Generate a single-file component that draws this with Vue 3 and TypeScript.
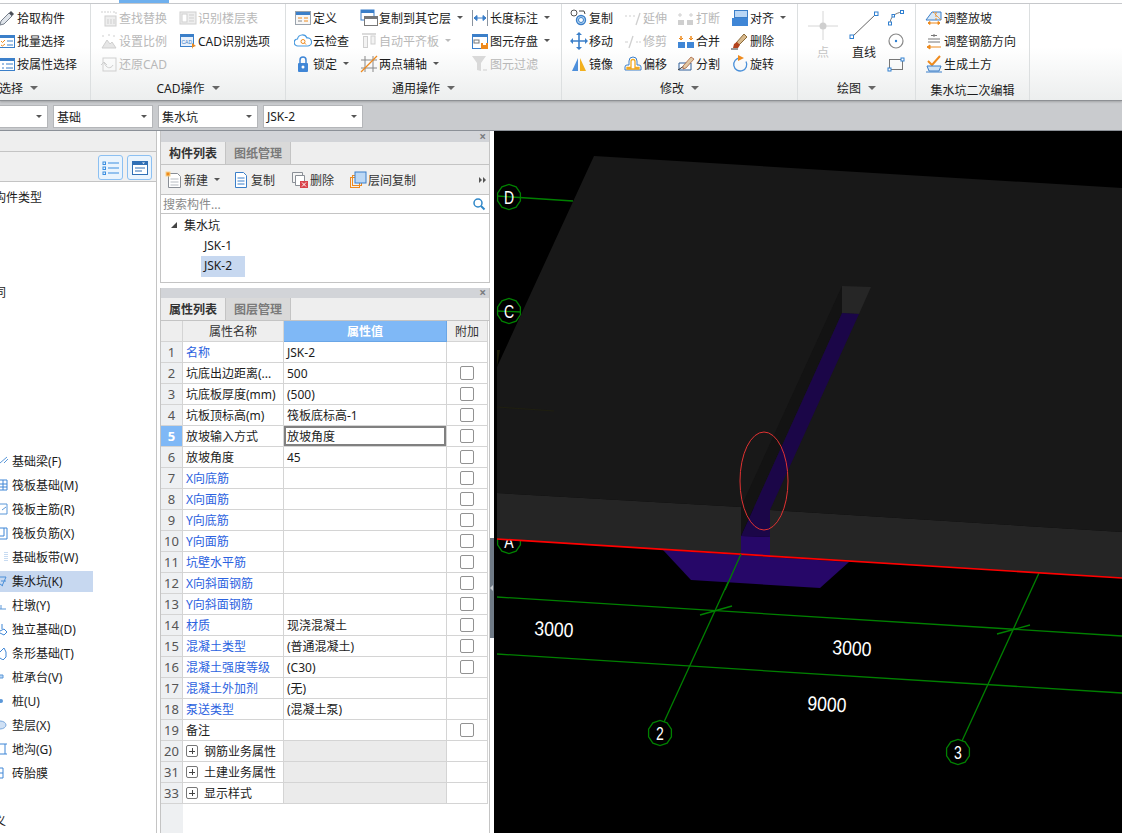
<template>
  <div class="app">
    <!-- 顶部页签线 -->
    <div class="tabline"><span class="tabline-active"></span></div>

    <!-- 功能区 -->
    <div class="ribbon">
      <template v-for="g in groups" :key="g.title">
        <section class="group" :style="{ width: g.width + 'px' }">
          <div v-if="g.draw" class="cols draw" :style="{ paddingLeft: g.pad + 'px' }">
            <div class="big big-point">
              <svg width="30" height="29" viewBox="0 0 30 29" v-html="icons.point"></svg>
              <span>点</span>
            </div>
            <div class="big big-line">
              <svg width="30" height="29" viewBox="0 0 30 29" v-html="icons.line"></svg>
              <span>直线</span>
            </div>
            <div class="col">
              <div v-for="n in ['arc', 'circle', 'rect']" :key="n" class="item">
                <svg class="ico" viewBox="0 0 18 18" v-html="icons[n]"></svg>
              </div>
            </div>
          </div>
          <div v-else class="cols" :style="{ paddingLeft: g.pad + 'px' }">
            <div v-for="(col, i) in g.cols" :key="i" class="col" :style="{ width: col.width + 'px' }">
              <div v-for="it in col.items" :key="it.label" class="item" :class="{ disabled: it.off }">
                <svg class="ico" viewBox="0 0 18 18" v-html="icons[it.icon]"></svg>
                <span class="lbl">{{ it.label }}</span>
                <i v-if="it.arrow" class="caret"></i>
              </div>
            </div>
          </div>
          <div class="gtitle" :class="g.titleClass">
            <span>{{ g.title }}</span>
            <i v-if="g.titleArrow" class="caret caret-title"></i>
          </div>
        </section>
      </template>
    </div>

    <!-- 下拉选择条 -->
    <div class="selbar">
      <div v-for="(s, i) in selects" :key="i" class="sel" :class="{ 'sel-first': i === 0 }">
        <span>{{ s }}</span>
        <i class="caret"></i>
      </div>
    </div>

    <div class="main">
      <!-- 左侧导航树 -->
      <aside class="nav">
        <div class="nav-head"></div>
        <div class="nav-tools">
          <div class="nav-btn">
            <svg width="18" height="14" viewBox="0 0 18 14" v-html="icons.navList"></svg>
          </div>
          <div class="nav-btn">
            <svg width="16" height="14" viewBox="0 0 16 14" v-html="icons.navForm"></svg>
          </div>
        </div>
        <div class="nav-tree">
          <div class="nav-cut nav-cut-1">构件类型</div>
          <div class="nav-cut nav-cut-2">同</div>
          <ul class="nav-list">
            <li v-for="(n, i) in navItems" :key="n" class="nav-row">
              <div class="nav-cell" :class="{ on: n === '集水坑(K)' }">
                <svg class="nav-ico" width="9" height="14" viewBox="0 0 9 14" v-html="navIcons[i % navIcons.length]"></svg>
                <span>{{ n }}</span>
              </div>
            </li>
          </ul>
          <div class="nav-cut nav-cut-3">义</div>
        </div>
      </aside>

      <div class="gap"></div>

      <!-- 中间面板 -->
      <div class="mid">
        <div class="panel panel-list">
          <div class="phead"><span class="px">×</span></div>
          <div class="ptabs">
            <span class="ptab on">构件列表</span>
            <span class="ptab">图纸管理</span>
          </div>
          <div class="ptools">
            <div v-for="t in tools" :key="t.label" class="ptool" :style="{ width: t.width + 'px' }">
              <svg class="ico" viewBox="0 0 18 18" v-html="icons[t.icon]"></svg>
              <span>{{ t.label }}</span>
              <i v-if="t.arrow" class="caret"></i>
            </div>
            <span class="pmore">
              <i class="tri"></i><i class="tri"></i>
            </span>
          </div>
          <div class="psearch">
            <span>搜索构件...</span>
            <svg width="14" height="14" viewBox="0 0 14 14">
              <circle cx="6" cy="6" r="4" fill="none" stroke="#2f87c8" stroke-width="1.5" />
              <path d="M9 9l3.5 3.5" stroke="#2f87c8" stroke-width="2" />
            </svg>
          </div>
          <div class="ptree">
            <div class="ptree-row"><i class="expand"></i><span>集水坑</span></div>
            <div class="ptree-row leaf"><span>JSK-1</span></div>
            <div class="ptree-row leaf"><span class="on">JSK-2</span></div>
          </div>
        </div>

        <div class="panel panel-props">
          <div class="phead short"><span class="px">×</span></div>
          <div class="ptabs">
            <span class="ptab on">属性列表</span>
            <span class="ptab">图层管理</span>
          </div>
          <div class="grid">
            <div class="tr th">
              <div class="td num"></div>
              <div class="td ctr">属性名称</div>
              <div class="td ctr val-head">属性值</div>
              <div class="td ctr">附加</div>
            </div>
            <div v-for="r in rows" :key="r.no" class="tr">
              <div class="td num" :class="{ cur: r.cur }">{{ r.no }}</div>
              <div class="td name" :class="{ blue: r.blue }">
                <template v-if="r.group">
                  <i class="plus"></i><span class="group-name">{{ r.name }}</span>
                </template>
                <template v-else>{{ r.name }}</template>
              </div>
              <div class="td val" :class="{ editing: r.cur, shaded: r.group }">{{ r.value }}</div>
              <div class="td attach"><i v-if="r.check" class="check"></i></div>
            </div>
            <div class="grid-rest"></div>
          </div>
        </div>
      </div>

      <!-- 分隔条 -->
      <div class="gutter">
        <div class="handle"><i></i></div>
      </div>

      <!-- 三维视图 -->
      <svg class="view" width="628" height="702" viewBox="494 131 628 702">
        <rect x="494" y="131" width="628" height="702" fill="#000" />

        <!-- 轴网 -->
        <g stroke="#008000" stroke-width="1.3" fill="none">
          <path d="M497 196L573 201" />
          <path d="M497 311L521 312" />
          <path d="M497 597L1122 636" />
          <path d="M497 654L1122 693" />
          <path d="M741 554L664 722" />
          <path d="M1039 573L962 741" />
          <path d="M700 615L732 606" />
          <path d="M997 634L1030 625" />
          <polygon v-for="b in bubbles" :key="b.t" :points="bubblePoints(b.x, b.y)" />
        </g>
        <text
          v-for="b in bubbles"
          :key="b.t"
          class="cad-text"
          text-anchor="middle"
          :transform="`translate(${b.x} ${b.y + 6.5}) scale(.78 1)`"
        >{{ b.t }}</text>

        <!-- 筏板 -->
        <polygon points="594,156 1122,188 1122,532 770,510 741,507 497,493 497,367" fill="#181818" />
        <polygon points="497,493 741,507 741,554 497,539" fill="#252525" />
        <polygon points="770,510 1122,532 1122,578 770,556" fill="#252525" />
        <path d="M497 407L554 411" stroke="#1f1f10" />
        <polygon points="497,350 500,350 497,367" fill="#1c1c08" />

        <!-- 集水坑 -->
        <polygon points="842,286 842,313 741,536 741,507" fill="#131313" />
        <polygon points="842,286 871,287 859,314 842,313" fill="#262626" />
        <polygon points="842,313 859,314 770,510 770,537 741,536" fill="#1b0648" />
        <polygon points="741,536 770,537 770,556 741,554" fill="#260768" />
        <polygon points="663,550 849,562 820,588 691,580" fill="#260768" />

        <path d="M497 539L1122 578" stroke="#f00" stroke-width="1.7" />
        <path d="M741 554L725 590" stroke="#008000" stroke-width="1.3" />
        <ellipse cx="764" cy="481" rx="24" ry="49" fill="none" stroke="#e03232" />

        <text class="cad-text dim" transform="translate(534 635) rotate(3.5) scale(.88 1)">3000</text>
        <text class="cad-text dim" transform="translate(832 654) rotate(3.5) scale(.88 1)">3000</text>
        <text class="cad-text dim" transform="translate(807 710) rotate(3.5) scale(.88 1)">9000</text>
      </svg>
    </div>
  </div>
</template>

<script setup lang="ts">
interface Item {
  label: string
  icon: string
  off?: boolean
  arrow?: boolean
}

interface Group {
  title: string
  width: number
  pad: number
  titleArrow?: boolean
  titleClass?: string
  draw?: boolean
  cols?: { width: number; items: Item[] }[]
}

const groups: Group[] = [
  {
    title: '选择',
    width: 91,
    pad: 0,
    titleArrow: true,
    titleClass: 'gtitle-left',
    cols: [
      {
        width: 90,
        items: [
          { label: '拾取构件', icon: 'pick' },
          { label: '批量选择', icon: 'batch' },
          { label: '按属性选择', icon: 'attr' }
        ]
      }
    ]
  },
  {
    title: 'CAD操作',
    width: 195,
    pad: 9,
    titleArrow: true,
    cols: [
      {
        width: 79,
        items: [
          { label: '查找替换', icon: 'find', off: true },
          { label: '设置比例', icon: 'scale', off: true },
          { label: '还原CAD', icon: 'restore', off: true }
        ]
      },
      {
        width: 100,
        items: [
          { label: '识别楼层表', icon: 'floors', off: true },
          { label: 'CAD识别选项', icon: 'cadOpt' }
        ]
      }
    ]
  },
  {
    title: '通用操作',
    width: 276,
    pad: 8,
    titleArrow: true,
    cols: [
      {
        width: 66,
        items: [
          { label: '定义', icon: 'define' },
          { label: '云检查', icon: 'cloud' },
          { label: '锁定', icon: 'lock', arrow: true }
        ]
      },
      {
        width: 111,
        items: [
          { label: '复制到其它层', icon: 'copyLayer', arrow: true },
          { label: '自动平齐板', icon: 'flush', off: true, arrow: true },
          { label: '两点辅轴', icon: 'axis', arrow: true }
        ]
      },
      {
        width: 85,
        items: [
          { label: '长度标注', icon: 'dim', arrow: true },
          { label: '图元存盘', icon: 'save', arrow: true },
          { label: '图元过滤', icon: 'filter', off: true }
        ]
      }
    ]
  },
  {
    title: '修改',
    width: 236,
    pad: 8,
    titleArrow: true,
    cols: [
      {
        width: 54,
        items: [
          { label: '复制', icon: 'copy' },
          { label: '移动', icon: 'move' },
          { label: '镜像', icon: 'mirror' }
        ]
      },
      {
        width: 53,
        items: [
          { label: '延伸', icon: 'extend', off: true },
          { label: '修剪', icon: 'trim', off: true },
          { label: '偏移', icon: 'offset' }
        ]
      },
      {
        width: 54,
        items: [
          { label: '打断', icon: 'breakup', off: true },
          { label: '合并', icon: 'merge' },
          { label: '分割', icon: 'split' }
        ]
      },
      {
        width: 60,
        items: [
          { label: '对齐', icon: 'align', arrow: true },
          { label: '删除', icon: 'erase' },
          { label: '旋转', icon: 'rotate' }
        ]
      }
    ]
  },
  { title: '绘图', width: 118, pad: 7, titleArrow: true, draw: true },
  {
    title: '集水坑二次编辑',
    width: 114,
    pad: 9,
    titleClass: 'gtitle-low',
    cols: [
      {
        width: 104,
        items: [
          { label: '调整放坡', icon: 'slope' },
          { label: '调整钢筋方向', icon: 'rebarDir' },
          { label: '生成土方', icon: 'earth' }
        ]
      }
    ]
  }
]

const selects = ['', '基础', '集水坑', 'JSK-2']

const navItems = [
  '基础梁(F)', '筏板基础(M)', '筏板主筋(R)', '筏板负筋(X)', '基础板带(W)', '集水坑(K)', '柱墩(Y)',
  '独立基础(D)', '条形基础(T)', '桩承台(V)', '桩(U)', '垫层(X)', '地沟(G)', '砖胎膜'
]

const tools = [
  { label: '新建', icon: 'newDoc', width: 67, arrow: true },
  { label: '复制', icon: 'copyDoc', width: 59 },
  { label: '删除', icon: 'delDoc', width: 58 },
  { label: '层间复制', icon: 'layerCopy', width: 72 }
]

const blueNames = new Set([1, 7, 8, 9, 10, 11, 12, 13, 14, 15, 16, 17, 18])
const noCheck = new Set([1, 17, 18, 20, 31, 33])

const rowData: [number, string, string][] = [
  [1, '名称', 'JSK-2'],
  [2, '坑底出边距离(...', '500'],
  [3, '坑底板厚度(mm)', '(500)'],
  [4, '坑板顶标高(m)', '筏板底标高-1'],
  [5, '放坡输入方式', '放坡角度'],
  [6, '放坡角度', '45'],
  [7, 'X向底筋', ''],
  [8, 'X向面筋', ''],
  [9, 'Y向底筋', ''],
  [10, 'Y向面筋', ''],
  [11, '坑壁水平筋', ''],
  [12, 'X向斜面钢筋', ''],
  [13, 'Y向斜面钢筋', ''],
  [14, '材质', '现浇混凝土'],
  [15, '混凝土类型', '(普通混凝土)'],
  [16, '混凝土强度等级', '(C30)'],
  [17, '混凝土外加剂', '(无)'],
  [18, '泵送类型', '(混凝土泵)'],
  [19, '备注', ''],
  [20, '钢筋业务属性', ''],
  [31, '土建业务属性', ''],
  [33, '显示样式', '']
]

const rows = rowData.map(([no, name, value]) => ({
  no,
  name,
  value,
  blue: blueNames.has(no),
  check: !noCheck.has(no),
  cur: no === 5,
  group: no >= 20
}))

const bubbles = [
  { t: 'D', x: 509, y: 197 },
  { t: 'C', x: 509, y: 311 },
  { t: 'A', x: 509, y: 541 },
  { t: '2', x: 660, y: 733 },
  { t: '3', x: 958, y: 752 }
]

// 轴号圈是十边形
const bubblePoints = (x: number, y: number) => {
  const pts: string[] = []
  for (let i = 0; i < 10; i++) {
    const a = (Math.PI * 2 * i) / 10 + Math.PI / 10
    pts.push(`${(x + 12 * Math.cos(a)).toFixed(1)},${(y + 12.5 * Math.sin(a)).toFixed(1)}`)
  }
  return pts.join(' ')
}

const B = '#3b7fc9'
const O = '#ee8a1d'
const G = '#cfcfcf'
const win = `<rect x="1.5" y="3.5" width="15" height="12" fill="#fff" stroke="${B}"/><rect x="1" y="3" width="16" height="3" fill="${B}"/>`

const icons: Record<string, string> = {
  pick: `<path d="M2 16l1-4 8-8 3 3-8 8z" fill="#dfe4ea" stroke="#77808c"/><path d="M11 4l2-2 3 3-2 2z" fill="#4a4f57"/>`,
  batch: `${win}<path d="M3 9l1.5 1.5L7 8M3 13l1.5 1L7 12" stroke="${O}" fill="none"/><path d="M9 9h6M9 13h6" stroke="${B}"/>`,
  attr: `${win}<path d="M4 9h2M4 13h2M8 9h7M8 13h7" stroke="${B}"/>`,
  find: `<path d="M1 3h10M13 3h3v3" stroke="${G}" stroke-dasharray="2 1" fill="none"/><rect x="5" y="7" width="11" height="10" fill="#eee" stroke="${G}"/><path d="M8 10v5M11 10v5M14 10v5" stroke="${G}"/>`,
  scale: `<path d="M2 16l5-8 3 4 2-2 4 6z" fill="#e6e6e6" stroke="${G}"/><path d="M2 4h3M13 4h3M9 2v3" stroke="${G}" stroke-dasharray="2 1"/>`,
  restore: `<rect x="3" y="3" width="13" height="13" fill="none" stroke="${G}"/><path d="M1 10l3-3 3 3M4 7c2 7 7 7 9 3" fill="none" stroke="${G}"/>`,
  floors: `<rect x="1" y="3" width="16" height="12" fill="#eee" stroke="${G}"/><rect x="3" y="5" width="5" height="8" fill="#fff" stroke="${G}"/><path d="M10 6h5M10 9h5M10 12h5" stroke="${G}"/>`,
  cadOpt: `<rect x="1.5" y="2.5" width="13" height="12" fill="#e9f1fb" stroke="${B}"/><rect x="1" y="2" width="14" height="3" fill="${B}"/><text x="2.5" y="12" font-size="5" fill="${B}" font-family="Liberation Sans">CAD</text><path d="M13 11l4 3-3 1-1 2z" fill="${O}"/>`,
  define: `<rect x="1.5" y="2.5" width="15" height="13" fill="#f7f7f7" stroke="#9aa3ad"/><rect x="2" y="3" width="14" height="3" fill="${B}"/><path d="M4 9h4M10 9h4M10 12h4" stroke="${O}"/><path d="M4 12h4" stroke="#888"/>`,
  cloud: `<path d="M4 14a3.5 3.5 0 0 1-.5-7A5 5 0 0 1 13 6a4 4 0 0 1 1 8z" fill="#fff" stroke="#4a9be0" stroke-width="1.2"/><circle cx="9" cy="9.5" r="2" fill="none" stroke="${O}"/><path d="M10.5 11l1.5 1.5" stroke="${O}"/>`,
  lock: `<path d="M6 8V5a3 3 0 0 1 6 0v3" fill="none" stroke="#3f86d6" stroke-width="1.5"/><rect x="4" y="8" width="10" height="9" rx="1" fill="#3f86d6"/><circle cx="9" cy="12" r="1.5" fill="#fff"/>`,
  copyLayer: `<rect x="1" y="1" width="13" height="10" fill="#fff" stroke="${B}"/><rect x="1" y="1" width="13" height="3" fill="${B}"/><rect x="4.5" y="7.5" width="13" height="9" fill="#fff" stroke="#777"/><rect x="4" y="7" width="14" height="3" fill="#777"/>`,
  flush: `<path d="M2 2h14" stroke="${G}" stroke-width="1.5"/><rect x="3.5" y="4.5" width="4" height="11" fill="#f3f3f3" stroke="${G}"/><rect x="11" y="4" width="4" height="8" fill="#f3f3f3" stroke="${G}"/>`,
  axis: `<path d="M5 1v16M13 1v16M1 5h16M1 13h16" stroke="#888"/><path d="M1 17L17 1" stroke="${O}" stroke-width="1.3"/>`,
  dim: `<path d="M1.5 1v16M16.5 1v16" stroke="#8a94a0"/><path d="M3 9h12M3 9l3-2.5v5zM15 9l-3-2.5v5z" stroke="${B}" fill="${B}"/>`,
  save: `<rect x="1.5" y="2.5" width="15" height="14" fill="#fff" stroke="${B}"/><rect x="1" y="2" width="16" height="3" fill="${B}"/><rect x="3" y="8" width="5" height="3" fill="none" stroke="#777"/><rect x="10" y="11" width="7" height="6" fill="${O}"/><rect x="12" y="11" width="3" height="2" fill="#fff"/>`,
  filter: `<path d="M1 1h14l-5 7v8l-4-1V8z" fill="#d9d9d9"/><path d="M12 15h4" stroke="${G}"/>`,
  copy: `<circle cx="4" cy="4" r="3" fill="#fff" stroke="#555"/><circle cx="11" cy="11" r="4.5" fill="#bcdcf5" stroke="${B}" stroke-width="1.4"/><circle cx="11" cy="11" r="2.5" fill="#fff" stroke="${B}"/><path d="M9 2h5l1 3" fill="none" stroke="#444"/>`,
  move: `<path d="M9 2v14M2 9h14" stroke="${B}" stroke-width="1.6"/><path d="M9 0l3 3H6zM9 18l3-3H6zM0 9l3-3v6zM18 9l-3-3v6z" fill="${B}"/>`,
  mirror: `<path d="M8 3v13H2z" fill="#4d8fdb"/><path d="M10 3v13h6z" fill="#f2b01e"/>`,
  extend: `<path d="M1 7h2M5 7h2M9 7h2" stroke="${G}"/><path d="M12 16l4-12" stroke="${G}" stroke-width="1.3"/>`,
  trim: `<path d="M1 10h3M12 10h2M15 10h2" stroke="${G}"/><path d="M5 16l4-12" stroke="${G}" stroke-width="1.3"/>`,
  offset: `<path d="M1 15v-3a2 2 0 0 1 2-2h2V6a4 4 0 0 1 8 0v4h2a2 2 0 0 1 2 2v3z" fill="#fff" stroke="${B}"/><path d="M3 14v-1.500h4V6.500a2 2 0 0 1 4 0v6h4V14z" fill="none" stroke="#f2a81e" stroke-width="1.3"/>`,
  breakup: `<rect x="1" y="11" width="6" height="5" fill="${G}"/><rect x="10" y="11" width="6" height="5" fill="${G}"/><path d="M3 4v4M14 4v4M1 6h4M12 6h4" stroke="${G}"/>`,
  merge: `<rect x="1" y="10" width="7" height="6" fill="#3f86d6"/><rect x="10" y="10" width="7" height="6" fill="#3f86d6"/><path d="M4 4v4M14 4v4" stroke="${O}" stroke-width="1.5"/><path d="M2 6l2 2 2-2M12 6l2 2 2-2" stroke="${O}" fill="none"/>`,
  split: `<path d="M2 8h12v7H2z" fill="#fff" stroke="#2f5e99"/><path d="M1 15l9-6" stroke="#333"/><path d="M6 11l8-9 3 2-8 9-3 1z" fill="#e2c9a5" stroke="#a0522d" stroke-width=".7"/>`,
  align: `<rect x="3.500" y="1.500" width="13" height="7" fill="#b9d6f5" stroke="${B}"/><rect x="1" y="9" width="16" height="8" fill="#3f86d6"/>`,
  erase: `<path d="M5 11l8-9 3 3-8 8z" fill="#d8b98c" stroke="#8a6a3a"/><path d="M3 12l3-2 3 3-2 3H2z" fill="#b3431d"/><path d="M0 17h7" stroke="#333"/>`,
  rotate: `<path d="M9 3a6.500 6.500 0 1 0 6 3.500" fill="none" stroke="#4a90d9" stroke-width="1.300"/><path d="M7 0l6 3-6 3z" fill="${O}"/>`,
  point: `<path d="M15 0v29M0 15h30" stroke="#d6d6d6"/><circle cx="15" cy="15" r="3.500" fill="#cfcfcf"/>`,
  line: `<path d="M3 26L27 3" stroke="#666"/><rect x="1" y="24" width="3.500" height="3.500" fill="#fff" stroke="#2f7fd0"/><rect x="25.500" y="1" width="3.500" height="3.500" fill="#fff" stroke="#2f7fd0"/>`,
  arc: `<path d="M3 15C3 8 8 4 15 3" fill="none" stroke="#777"/><rect x="1.500" y="13" width="3" height="3" fill="#fff" stroke="#2f7fd0"/><rect x="13.500" y="1.500" width="3" height="3" fill="#fff" stroke="#2f7fd0"/><rect x="5" y="5.500" width="2.500" height="2.500" fill="#fff" stroke="#2f7fd0"/>`,
  circle: `<circle cx="9" cy="9" r="7" fill="#fff" stroke="#888" stroke-width="1.200"/><circle cx="9" cy="9" r="1.200" fill="#2f7fd0"/>`,
  rect: `<rect x="2.500" y="4.500" width="13" height="10" fill="none" stroke="#777"/><rect x="1" y="13" width="3" height="3" fill="#fff" stroke="#2f7fd0"/><rect x="14" y="3" width="3" height="3" fill="#fff" stroke="#2f7fd0"/>`,
  slope: `<path d="M1 11L7 3h9v8z" fill="#d9e9f8" stroke="${B}"/><path d="M8 3l8 8M11 3v8" stroke="${O}" stroke-dasharray="2 1"/><path d="M3 14h12M3 14l2-1.500v3zM15 14l-2-1.500v3z" stroke="${O}" fill="${O}"/>`,
  rebarDir: `<path d="M9 2v3M6 3.500h6M3 7h12M3 10h12" stroke="#777"/><path d="M2 15h14M2 15l3-2v4z" stroke="${O}" fill="${O}"/>`,
  earth: `<path d="M3 6l4 4 8-9" fill="none" stroke="${O}" stroke-width="2"/><path d="M2 11h14l-2 5H4z" fill="#cfe2f5" stroke="${B}"/><path d="M1 17h16" stroke="${B}"/>`,
  newDoc: `<path d="M3.500 2.500h9l3 3v11h-12z" fill="#fff" stroke="#8a8f96"/><path d="M5.500 8h8M5.500 11h8M5.500 14h8" stroke="#b6bbc1"/><rect x="1" y="1" width="4" height="4" fill="${O}" stroke="#f7d28b"/>`,
  copyDoc: `<path d="M3.500 1.500h8l3 3v12h-11z" fill="#fff" stroke="${B}"/><path d="M5.500 7h7M5.500 10h7M5.500 13h7" stroke="${B}"/>`,
  delDoc: `<path d="M1.500 1.500h10v10h-10z" fill="#f5f5f5" stroke="#8a8f96"/><path d="M4.500 4.500h9v10h-9z" fill="#fff" stroke="#8a8f96"/><rect x="9" y="10" width="8" height="7" fill="#d9424a"/><path d="M11 11.500l4 4M15 11.500l-4 4" stroke="#fff"/>`,
  layerCopy: `<rect x="1.500" y="6.500" width="9" height="10" fill="none" stroke="${O}"/><rect x="3.500" y="4.500" width="9" height="10" fill="none" stroke="${O}"/><rect x="6" y="1" width="11" height="11" fill="#bcd8f5" stroke="${B}"/>`,
  navList: `<path d="M6 2h11M6 7h11M6 12h11" stroke="#3b8ee0"/><rect x="1" y="1" width="2.500" height="2.500" fill="none" stroke="#3b8ee0"/><rect x="1" y="6" width="2.500" height="2.500" fill="none" stroke="#3b8ee0"/><rect x="1" y="11" width="2.500" height="2.500" fill="none" stroke="#3b8ee0"/>`,
  navForm: `<rect x=".5" y=".5" width="15" height="13" fill="#fff" stroke="#2f6fb5"/><rect x="0" y="0" width="16" height="4" fill="#2f6fb5"/><path d="M10 1.500l1.500 1.500 1.500-1.500" fill="#fff"/><path d="M3 7h10M3 10h7" stroke="#2f6fb5"/>`
}

const navIcons = [
  `<path d="M0 9l7-6M4 9l4-4" stroke="#5a97d8" fill="none"/>`,
  `<path d="M0 2h7v10H0M3 2v10M0 6h7M0 9h7" stroke="#3f86d6" fill="none"/>`,
  `<path d="M0 2h7v10H0M2 8l4-3" stroke="#5a97d8" fill="none"/>`,
  `<path d="M0 2h7v11H0M4 2v8H0" stroke="#3f86d6" fill="none"/>`,
  `<path d="M5 2v10M7 2v10" stroke="#8fb6e3" stroke-dasharray="1 1" fill="none"/>`,
  `<path d="M0 3h6l-4 9M1 7h5M0 10l3 2" stroke="#4a8fd8" fill="none"/>`,
  `<path d="M0 11h6M1 7v4" stroke="#5a97d8" fill="none"/>`,
  `<path d="M0 9l4-2 3 3-3 3-4-2M2 2v5" stroke="#3f86d6" fill="none"/>`,
  `<path d="M0 6l4-4 2 4v5l-3 3-3-2" stroke="#3f86d6" fill="none"/>`,
  `<path d="M0 5h3v3H0" stroke="#5a97d8" fill="#bcd8f5"/>`,
  `<circle cx="1" cy="7" r="2" fill="#5a97d8"/>`,
  `<ellipse cx="0" cy="7" rx="6" ry="4" fill="#cfe0f4" stroke="#7aa8dd"/>`,
  `<path d="M0 2h7M5 2v10M0 12h7" stroke="#3f86d6" fill="none"/>`,
  `<path d="M0 2h3v10H0M0 7h3" stroke="#3f86d6" fill="none"/>`
]
</script>

<style scoped>
.app {
  width: 1122px;
  height: 833px;
  overflow: hidden;
  background: #fff;
  font-family: "Noto Sans", "Noto Sans CJK SC", sans-serif;
  font-size: 12px;
  color: #1c1c1c;
}

.tabline {
  height: 4px;
  box-sizing: border-box;
  border-bottom: 1px solid #c9cbce;
  background: #fff;
}

.tabline-active {
  display: block;
  width: 50px;
  height: 3px;
  margin-left: 119px;
  background: #6fb0ee;
}

.ribbon {
  display: flex;
  height: 97px;
  box-sizing: border-box;
  background: linear-gradient(#fff 45%, #eceeee);
  border-bottom: 1px solid #8d9094;
  box-shadow: 0 1px 2px rgba(0, 0, 0, 0.2);
  position: relative;
}

.group {
  height: 96px;
  box-sizing: border-box;
  padding-top: 2px;
  display: flex;
  flex-direction: column;
  overflow: hidden;
  border-right: 1px solid #dcdfe0;
  flex-shrink: 0;
}

.cols {
  display: flex;
  height: 69px;
}

.col {
  display: flex;
  flex-direction: column;
  flex-shrink: 0;
}

.item {
  height: 23px;
  display: flex;
  align-items: center;
  white-space: nowrap;
}

.item.disabled {
  color: #b8b8b8;
}

.ico {
  width: 18px;
  height: 18px;
  flex-shrink: 0;
  margin-right: 1px;
}

.group:first-child .ico {
  margin-left: -2px;
}

.caret {
  display: inline-block;
  width: 0;
  height: 0;
  margin-left: 6px;
  border-left: 3px solid transparent;
  border-right: 3px solid transparent;
  border-top: 3px solid #555;
  flex-shrink: 0;
}

.disabled .caret {
  border-top-color: #bbb;
}

.caret-title {
  margin-left: 7px;
  border-left-width: 4px;
  border-right-width: 4px;
  border-top-width: 4px;
  border-top-color: #666;
}

.gtitle {
  height: 21px;
  margin-top: 2px;
  display: flex;
  align-items: center;
  justify-content: center;
  white-space: nowrap;
}

.gtitle-left {
  justify-content: flex-start;
  margin-left: -1px;
}

.gtitle-low {
  padding-top: 4px;
  box-sizing: border-box;
}

.big {
  display: flex;
  flex-direction: column;
  align-items: center;
  padding-top: 5px;
  flex-shrink: 0;
}

.big span {
  margin-top: 5px;
  line-height: 16px;
}

.big-point {
  width: 36px;
  color: #c4c4c4;
}

.big-line {
  width: 46px;
}

.selbar {
  height: 30px;
  box-sizing: border-box;
  background: #c9cbce;
  border-bottom: 1px solid #8c9198;
  display: flex;
  gap: 5px;
  padding-top: 4px;
}

.sel {
  width: 100px;
  height: 23px;
  box-sizing: border-box;
  background: #fff;
  border: 1px solid #b4b6b9;
  display: flex;
  align-items: center;
  justify-content: space-between;
  padding: 0 5px 0 3px;
}

.sel-first {
  width: 48px;
  border-left: none;
}

.main {
  display: flex;
  height: 702px;
}

.nav {
  width: 157px;
  box-sizing: border-box;
  border-right: 1px solid #c4c4c4;
  flex-shrink: 0;
  overflow: hidden;
}

.nav-head {
  height: 21px;
  box-sizing: border-box;
  background: #eeeeee;
  border-bottom: 1px solid #c4c4c4;
}

.nav-tools {
  height: 30px;
  box-sizing: border-box;
  background: #f0f0f0;
  border-bottom: 1px solid #c4c4c4;
  display: flex;
  justify-content: flex-end;
  gap: 4px;
  padding: 3px 4px 0 0;
}

.nav-btn {
  width: 25px;
  height: 25px;
  box-sizing: border-box;
  border: 1px solid #8cc0f2;
  border-radius: 3px;
  background: #eaf4fd;
  display: flex;
  align-items: center;
  justify-content: center;
}

.nav-cut {
  height: 24px;
  line-height: 24px;
  margin-left: -6px;
  white-space: nowrap;
}

.nav-cut-1 {
  margin-top: 4px;
}

.nav-cut-2 {
  margin-top: 71px;
}

.nav-cut-3 {
  margin-top: 25px;
}

.nav-list {
  list-style: none;
  margin: 144px 0 0;
  padding: 0;
}

.nav-row {
  height: 24px;
  display: flex;
  align-items: center;
}

.nav-cell {
  width: 93px;
  height: 21px;
  display: flex;
  align-items: center;
}

.nav-cell.on {
  background: #c7d8f0;
}

.nav-ico {
  margin-right: 3px;
  flex-shrink: 0;
}

.gap {
  width: 3px;
  flex-shrink: 0;
}

.mid {
  width: 330px;
  flex-shrink: 0;
  display: flex;
  flex-direction: column;
  gap: 5px;
}

.panel {
  box-sizing: border-box;
  border: 1px solid #c4c4c4;
  border-top: none;
  display: flex;
  flex-direction: column;
  overflow: hidden;
}

.panel-list {
  height: 152px;
}

.panel-props {
  height: 545px;
  border-bottom: none;
}

.phead {
  height: 11px;
  background: #d2d4d8;
  display: flex;
  justify-content: flex-end;
  align-items: center;
  padding-right: 3px;
  flex-shrink: 0;
}

.phead.short {
  height: 10px;
}

.px {
  font-size: 12px;
  font-weight: 700;
  line-height: 10px;
  color: #7a7c80;
}

.ptabs {
  height: 23px;
  box-sizing: border-box;
  background: #eeeeee;
  border-bottom: 1px solid #c4c4c4;
  display: flex;
  flex-shrink: 0;
}

.ptab {
  width: 65px;
  box-sizing: border-box;
  text-align: center;
  line-height: 24px;
  font-weight: 700;
  color: #7a7a7a;
  background: #d9d9d9;
  border-right: 1px solid #c4c4c4;
}

.ptab.on {
  background: #eeeeee;
  color: #333;
}

.ptools {
  height: 30px;
  box-sizing: border-box;
  background: #f0f0f0;
  border-bottom: 1px solid #c4c4c4;
  display: flex;
  align-items: center;
  padding-left: 4px;
  flex-shrink: 0;
}

.ptool {
  display: flex;
  align-items: center;
  flex-shrink: 0;
  white-space: nowrap;
  color: #333;
}

.pmore {
  margin-left: auto;
  margin-right: 2px;
  display: flex;
}

.tri {
  width: 0;
  height: 0;
  border-top: 3px solid transparent;
  border-bottom: 3px solid transparent;
  border-left: 3px solid #555;
  margin-right: 1px;
}

.psearch {
  height: 19px;
  box-sizing: border-box;
  background: #fff;
  border-bottom: 1px solid #c4c4c4;
  display: flex;
  align-items: center;
  justify-content: space-between;
  padding: 0 3px 0 2px;
  color: #8a8a8a;
  flex-shrink: 0;
}

.ptree {
  flex: 1;
  padding-top: 1px;
}

.ptree-row {
  height: 20.5px;
  display: flex;
  align-items: center;
  padding-left: 10px;
}

.ptree-row.leaf {
  padding-left: 43px;
}

.ptree-row .on {
  background: #c7d8f0;
  width: 44px;
  height: 20.5px;
  line-height: 20.5px;
  padding-left: 3px;
  margin-left: -3px;
  box-sizing: border-box;
}

.expand {
  width: 0;
  height: 0;
  border-left: 6px solid transparent;
  border-bottom: 6px solid #444;
  margin-right: 7px;
}

.ptree-row.leaf span {
  display: block;
}

.grid {
  flex: 1;
  display: flex;
  flex-direction: column;
  min-height: 0;
}

.tr {
  display: grid;
  grid-template-columns: 22px 101px 163px 41px;
  width: 327px;
  height: 21px;
  flex-shrink: 0;
}

.td {
  box-sizing: border-box;
  border-right: 1px solid #d4d4d4;
  border-bottom: 1px solid #d4d4d4;
  display: flex;
  align-items: center;
  white-space: nowrap;
  overflow: hidden;
}

.th .td {
  background: #eeeeee;
  color: #333;
}

.ctr {
  justify-content: center;
}

.th .val-head {
  background: #7fb8f6;
  color: #fff;
  font-weight: 700;
  border-color: #6aa6e6;
}

.num {
  background: #eef0f2;
  justify-content: center;
  color: #555;
  font-size: 13px;
}

.num.cur {
  background: #7fb8f6;
  color: #fff;
  font-weight: 700;
}

.name {
  padding-left: 3px;
}

.name.blue {
  color: #2b62e0;
}

.val {
  padding-left: 3px;
}

.val.editing {
  box-shadow: inset 0 0 0 2px #808080;
}

.val.shaded {
  background: #ebebeb;
}

.attach {
  justify-content: center;
}

.check {
  width: 14px;
  height: 14px;
  box-sizing: border-box;
  border: 1px solid #929292;
  border-radius: 2px;
  background: #fff;
}

.plus {
  width: 12px;
  height: 12px;
  box-sizing: border-box;
  border: 1px solid #777;
  border-radius: 2px;
  flex-shrink: 0;
  background:
    linear-gradient(#444, #444) center / 6px 1px no-repeat,
    linear-gradient(#444, #444) center / 1px 6px no-repeat;
}

.group-name {
  margin-left: 6px;
}

.grid-rest {
  flex: 1;
  width: 22px;
  background: #eef0f2;
}

.gutter {
  width: 4px;
  flex-shrink: 0;
  padding-top: 407px;
}

.handle {
  height: 100px;
  width: 4px;
  background: #6f7a86;
  display: flex;
  align-items: center;
}

.handle i {
  width: 0;
  height: 0;
  border-top: 3px solid transparent;
  border-bottom: 3px solid transparent;
  border-right: 3px solid #c9ccd0;
}

.view {
  display: block;
  flex-shrink: 0;
}

.cad-text {
  fill: #fff;
  font-family: "Liberation Sans", sans-serif;
  font-size: 18px;
}

.dim {
  font-size: 20px;
}
</style>
